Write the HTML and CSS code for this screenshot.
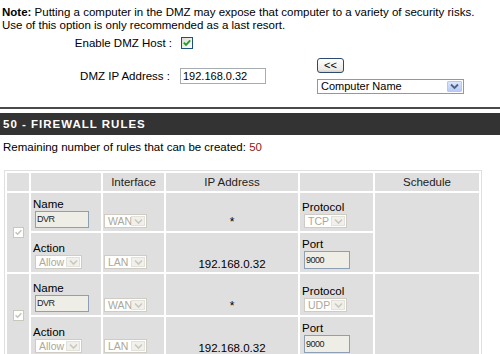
FILE: index.html
```html
<!DOCTYPE html>
<html>
<head>
<meta charset="utf-8">
<link rel="stylesheet" href="styles.css">
</head>
<body>
<div class="page">
  <p class="note"><b>Note:</b> Putting a computer in the DMZ may expose that computer to a variety of security risks.<br>Use of this option is only recommended as a last resort.</p>

  <div class="frow enable">
    <span class="lbl">Enable DMZ Host :</span>
    <span class="chk on"><svg width="10" height="10" viewBox="0 0 10 10"><path d="M1.8 4.6 L4 6.9 L8.2 2.4" fill="none" stroke="#21a121" stroke-width="1.9"/></svg></span>
  </div>

  <div class="frow ip">
    <span class="lbl">DMZ IP Address :</span>
    <span class="ipbox">192.168.0.32</span>
    <div class="pick">
      <span class="btn">&lt;&lt;</span>
      <span class="sel big"><span class="v">Computer Name</span><span class="arr"><svg width="9" height="7" viewBox="0 0 9 7"><path d="M1 1.5 L4.5 5 L8 1.5" fill="none" stroke="#4d6185" stroke-width="1.8"/></svg></span></span>
    </div>
  </div>

  <div class="rule"></div>
  <h2 class="bar">50 - FIREWALL RULES</h2>
  <p class="remain">Remaining number of rules that can be created: <span class="num">50</span></p>

  <table class="rules">
    <colgroup>
      <col class="c1"><col class="c2"><col class="c3"><col class="c4"><col class="c5"><col class="c6">
    </colgroup>
    <tr class="head">
      <td></td><td></td><td>Interface</td><td>IP Address</td><td></td><td>Schedule</td>
    </tr>

    <tr class="r-top">
      <td rowspan="2" class="cb"><span class="chk dis"><svg width="9" height="9" viewBox="0 0 9 9"><path d="M1.6 4.2 L3.6 6.2 L7.4 2.2" fill="none" stroke="#c4c3bb" stroke-width="1.5"/></svg></span></td>
      <td><div class="cap">Name</div><span class="din w-name">DVR</span></td>
      <td><span class="sel dis w-if"><span class="v">WAN</span><span class="arr"><svg width="9" height="7" viewBox="0 0 9 7"><path d="M1 1.5 L4.5 5 L8 1.5" fill="none" stroke="#c9c8c0" stroke-width="1.6"/></svg></span></span></td>
      <td class="ipc star">*</td>
      <td><div class="cap">Protocol</div><span class="sel dis w-proto"><span class="v">TCP</span><span class="arr"><svg width="9" height="7" viewBox="0 0 9 7"><path d="M1 1.5 L4.5 5 L8 1.5" fill="none" stroke="#c9c8c0" stroke-width="1.6"/></svg></span></span></td>
      <td rowspan="2"></td>
    </tr>
    <tr class="r-bot">
      <td><div class="cap">Action</div><span class="sel dis w-act"><span class="v">Allow</span><span class="arr"><svg width="9" height="7" viewBox="0 0 9 7"><path d="M1 1.5 L4.5 5 L8 1.5" fill="none" stroke="#c9c8c0" stroke-width="1.6"/></svg></span></span></td>
      <td><span class="sel dis w-if"><span class="v">LAN</span><span class="arr"><svg width="9" height="7" viewBox="0 0 9 7"><path d="M1 1.5 L4.5 5 L8 1.5" fill="none" stroke="#c9c8c0" stroke-width="1.6"/></svg></span></span></td>
      <td class="ipc">192.168.0.32</td>
      <td><div class="cap">Port</div><span class="din w-port">9000</span></td>
    </tr>

    <tr class="r-top r3">
      <td rowspan="2" class="cb"><span class="chk dis"><svg width="9" height="9" viewBox="0 0 9 9"><path d="M1.6 4.2 L3.6 6.2 L7.4 2.2" fill="none" stroke="#c4c3bb" stroke-width="1.5"/></svg></span></td>
      <td><div class="cap">Name</div><span class="din w-name">DVR</span></td>
      <td><span class="sel dis w-if"><span class="v">WAN</span><span class="arr"><svg width="9" height="7" viewBox="0 0 9 7"><path d="M1 1.5 L4.5 5 L8 1.5" fill="none" stroke="#c9c8c0" stroke-width="1.6"/></svg></span></span></td>
      <td class="ipc star">*</td>
      <td><div class="cap">Protocol</div><span class="sel dis w-proto"><span class="v">UDP</span><span class="arr"><svg width="9" height="7" viewBox="0 0 9 7"><path d="M1 1.5 L4.5 5 L8 1.5" fill="none" stroke="#c9c8c0" stroke-width="1.6"/></svg></span></span></td>
      <td rowspan="2"></td>
    </tr>
    <tr class="r-bot">
      <td><div class="cap">Action</div><span class="sel dis w-act"><span class="v">Allow</span><span class="arr"><svg width="9" height="7" viewBox="0 0 9 7"><path d="M1 1.5 L4.5 5 L8 1.5" fill="none" stroke="#c9c8c0" stroke-width="1.6"/></svg></span></span></td>
      <td><span class="sel dis w-if"><span class="v">LAN</span><span class="arr"><svg width="9" height="7" viewBox="0 0 9 7"><path d="M1 1.5 L4.5 5 L8 1.5" fill="none" stroke="#c9c8c0" stroke-width="1.6"/></svg></span></span></td>
      <td class="ipc">192.168.0.32</td>
      <td><div class="cap">Port</div><span class="din w-port">9000</span></td>
    </tr>

    <tr class="r-top">
      <td rowspan="2" class="cb"></td>
      <td></td><td></td><td></td><td></td><td rowspan="2"></td>
    </tr>
    <tr class="r-bot">
      <td></td><td></td><td></td><td></td>
    </tr>
  </table>
</div>
</body>
</html>
```

FILE: styles.css
```css
html, body {
  margin: 0;
  padding: 0;
  background: #fff;
}
body {
  font-family: "Liberation Sans", Arial, sans-serif;
  font-size: 11.5px;
  color: #000;
  overflow: hidden;
}
.page {
  width: 500px;
}
.note {
  margin: 0;
  padding: 6px 0 0 2px;
  line-height: 12.5px;
}
.frow {
  display: flex;
  align-items: center;
}
.lbl {
  width: 172px;
  text-align: right;
  line-height: 12px;
}
.enable {
  margin-top: 6px;
  height: 12px;
}
.enable .chk {
  margin-left: 9px;
}
.chk {
  box-sizing: border-box;
  display: flex;
  align-items: center;
  justify-content: center;
}
.chk.on {
  width: 12px;
  height: 12px;
  border: 1px solid #1c5180;
  background: linear-gradient(135deg, #dcdcd7, #fff);
}
.chk.dis {
  width: 11px;
  height: 11px;
  border: 1px solid #cac8bb;
  background: #fff;
}
.ip {
  margin-top: 9px;
}
.ip .lbl {
  width: 170px;
}
.ipbox {
  box-sizing: border-box;
  margin-left: 10px;
  width: 86px;
  height: 16px;
  border: 1px solid #a5acb2;
  padding-left: 2px;
  line-height: 14px;
  font-size: 11px;
  background: #fff;
}
.pick {
  margin-left: 51px;
  display: flex;
  flex-direction: column;
  align-items: flex-start;
  gap: 6px;
}
.btn {
  box-sizing: border-box;
  width: 27px;
  height: 15px;
  border: 1px solid #2d4b6e;
  border-radius: 3px;
  background: linear-gradient(#ffffff, #ecebe6 80%, #d6d0c5);
  text-align: center;
  line-height: 13px;
  font-size: 11px;
}
.sel {
  box-sizing: border-box;
  display: flex;
  align-items: center;
  background: #fff;
  padding: 1px;
}
.sel .v {
  flex: 1;
  padding-left: 2px;
  line-height: 11px;
  white-space: nowrap;
  overflow: hidden;
}
.sel .arr {
  display: flex;
  align-items: center;
  justify-content: center;
  box-sizing: border-box;
  align-self: stretch;
}
.sel.big {
  width: 147px;
  height: 15px;
  border: 1px solid #7f9db9;
}
.sel.big .v {
  font-size: 11px;
}
.sel.big .arr {
  width: 15px;
  background: linear-gradient(#dbe6fe, #b7cbf6);
  border: 1px solid #b4c8f6;
  border-radius: 1px;
}
.sel.dis {
  height: 14px;
  border: 1px solid #cfcdc3;
}
.sel.dis .v {
  color: #aca899;
  font-size: 10.5px;
}
.sel.dis .arr {
  width: 14px;
  background: #f1f0ea;
  border: 1px solid #e2e1da;
}
.rule {
  margin-top: 13px;
  height: 2px;
  background: #4a4a4a;
}
.bar {
  margin: 4px 0 0 0;
  height: 22px;
  background: #333;
  color: #fff;
  font-size: 11.5px;
  font-weight: bold;
  line-height: 22px;
  letter-spacing: 1px;
  padding-left: 3px;
}
.remain {
  margin: 5px 0 0 0;
  padding-left: 3px;
  line-height: 14px;
}
.remain .num {
  color: #8c1b1b;
}
.rules {
  margin: 16px 0 0 4px;
  border: 1px solid #dfdfdf;
  border-spacing: 2px;
  table-layout: fixed;
  width: 478px;
  background: #fff;
}
.c1 { width: 22px; }
.c2 { width: 70px; }
.c3 { width: 61px; }
.c4 { width: 132px; }
.c5 { width: 73px; }
.c6 { width: 104px; }
.rules td {
  background: #dfdfdf;
  padding: 0;
  vertical-align: bottom;
}
.head td {
  height: 18px;
  text-align: center;
  line-height: 18px;
  vertical-align: middle;
  color: #222;
}
.r-top td { height: 36px; }
.r-bot td { height: 38px; }
.r-top.r3 td { height: 39px; }
.rules td.cb {
  vertical-align: middle;
}
.cb .chk {
  margin-left: 6px;
}
.cap {
  line-height: 13px;
  padding-left: 2px;
}
.rules td > .din,
.rules td > .sel {
  margin-bottom: 3px;
}
.din {
  box-sizing: border-box;
  display: block;
  height: 17px;
  margin-left: 4px;
  border: 1px solid #8c9fb4;
  background: #efeee6;
  font-size: 9px;
  letter-spacing: -0.5px;
  line-height: 15px;
  padding-left: 1px;
  color: #222;
}
.w-name { width: 54px; }
.w-port { width: 46px; height: 18px; line-height: 16px; }
.w-if { width: 43px; margin-left: 1px; }
.w-act { width: 47px; margin-left: 4px; }
.w-proto { width: 43px; margin-left: 4px; }
.rules td.ipc {
  text-align: center;
  line-height: 13px;
  padding-bottom: 1px;
}
.rules td.star {
  padding-bottom: 2px;
  font-size: 12px;
}
```
